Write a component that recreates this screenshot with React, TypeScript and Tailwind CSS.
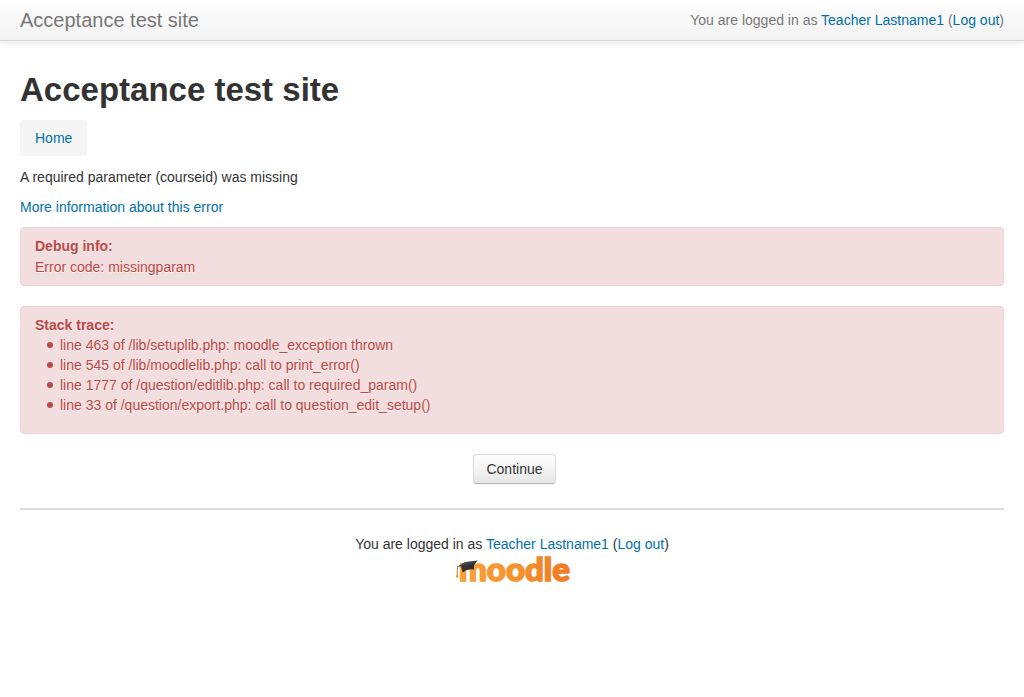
import React from "react";

interface LoginInfoProps {
  className?: string;
}

const LoginInfo: React.FC<LoginInfoProps> = ({ className }) => {
  return (
    <p className={className}>
      You are logged in as{" "}
      <a href="#profile" className="text-[#0070a8] hover:underline">
        Teacher Lastname1
      </a>{" "}
      (
      <a href="#logout" className="text-[#0070a8] hover:underline">
        Log out
      </a>
      )
    </p>
  );
};

const MoodleLogo: React.FC = () => {
  return (
    <svg
      width="112"
      height="30"
      viewBox="0 0 112 30"
      className="block overflow-visible"
      role="img"
      aria-label="Moodle"
    >
      <defs>
        <linearGradient id="wordmark" x1="0" y1="0" x2="1" y2="0">
          <stop offset="0" stopColor="#f9a03a" />
          <stop offset="0.5" stopColor="#f7922d" />
          <stop offset="1" stopColor="#ef7a22" />
        </linearGradient>
        <linearGradient id="cap" x1="0" y1="0" x2="1" y2="1">
          <stop offset="0" stopColor="#6b6b6b" />
          <stop offset="1" stopColor="#151515" />
        </linearGradient>
      </defs>
      <text
        x="3"
        y="27"
        fill="url(#wordmark)"
        stroke="url(#wordmark)"
        strokeWidth="1.6"
        className="font-[family-name:Lato] text-[33px] font-black"
      >
        moodle
      </text>
      <path d="M5 12 L18 11 L18 15.5 Q12 14.5 6.5 18.5 Z" fill="#333" />
      <path d="M0.5 13 L9 8 L21.5 6.5 L16.5 13.5 Q8 11.5 0.5 13 Z" fill="url(#cap)" />
      <path d="M1.8 12.7 Q1 16 1.4 19" fill="none" stroke="#555" strokeWidth="0.7" />
      <path d="M1.2 16.5 L0 23.5 L2.4 23.5 Z" fill="#f08a2c" />
    </svg>
  );
};

const stackTrace = [
  "line 463 of /lib/setuplib.php: moodle_exception thrown",
  "line 545 of /lib/moodlelib.php: call to print_error()",
  "line 1777 of /question/editlib.php: call to required_param()",
  "line 33 of /question/export.php: call to question_edit_setup()",
];

const App: React.FC = () => {
  return (
    <div className="min-h-screen bg-white font-['Nimbus_Sans','Liberation_Sans',Arial,sans-serif] text-sm text-[#333]">
      <header className="flex h-[41px] items-center justify-between border-b border-[#d4d4d4] bg-linear-to-b from-white to-[#f2f2f2] px-5 text-[#777] shadow-[0_1px_10px_rgba(0,0,0,0.1)]">
        <a href="#site" className="text-xl leading-5">
          Acceptance test site
        </a>
        <LoginInfo />
      </header>

      <div className="px-5">
        <h1 className="mt-[29px] text-[33px] leading-10 font-bold">
          Acceptance test site
        </h1>
        <nav aria-label="Breadcrumb" className="mt-[10px] flex">
          <ol className="rounded bg-[#f5f5f5] px-[15px] py-2">
            <li>
              <a href="#home" className="text-[#0070a8] hover:underline">
                Home
              </a>
            </li>
          </ol>
        </nav>

        <main>
          <p className="mt-[11px]">A required parameter (courseid) was missing</p>
          <p className="mt-[10px]">
            <a href="#more" className="text-[#0070a8] hover:underline">
              More information about this error
            </a>
          </p>

          <div className="mt-[10px] rounded border border-[#eed3d7] bg-[#f2dede] px-[14px] py-2 text-[#b94a48] [text-shadow:0_1px_0_rgba(255,255,255,0.5)]">
            <strong className="block leading-[21px]">Debug info:</strong>
            <p>Error code: missingparam</p>
          </div>

          <div className="mt-5 rounded border border-[#eed3d7] bg-[#f2dede] px-[14px] pt-2 pb-[18px] text-[#b94a48] [text-shadow:0_1px_0_rgba(255,255,255,0.5)]">
            <strong className="block">Stack trace:</strong>
            <ul className="pl-3">
              {stackTrace.map((line) => (
                <li
                  key={line}
                  className="flex items-center gap-[7px] before:size-[6px] before:shrink-0 before:rounded-full before:bg-[#b94a48]"
                >
                  {line}
                </li>
              ))}
            </ul>
          </div>

          <div className="mt-5 flex justify-center pl-[5px]">
            <button
              type="button"
              className="cursor-pointer rounded border border-[#d9d9d9] border-b-[#b3b3b3] bg-linear-to-b from-white to-[#e6e6e6] px-3 py-1 shadow-[inset_0_1px_0_rgba(255,255,255,0.2),0_1px_2px_rgba(0,0,0,0.05)] [text-shadow:0_1px_1px_rgba(255,255,255,0.75)]"
            >
              Continue
            </button>
          </div>
        </main>

        <footer className="mt-6 flex flex-col items-center border-t-2 border-[#ddd] pt-6">
          <LoginInfo />
          <a href="#moodle">
            <MoodleLogo />
          </a>
        </footer>
      </div>
    </div>
  );
};

export default App;
